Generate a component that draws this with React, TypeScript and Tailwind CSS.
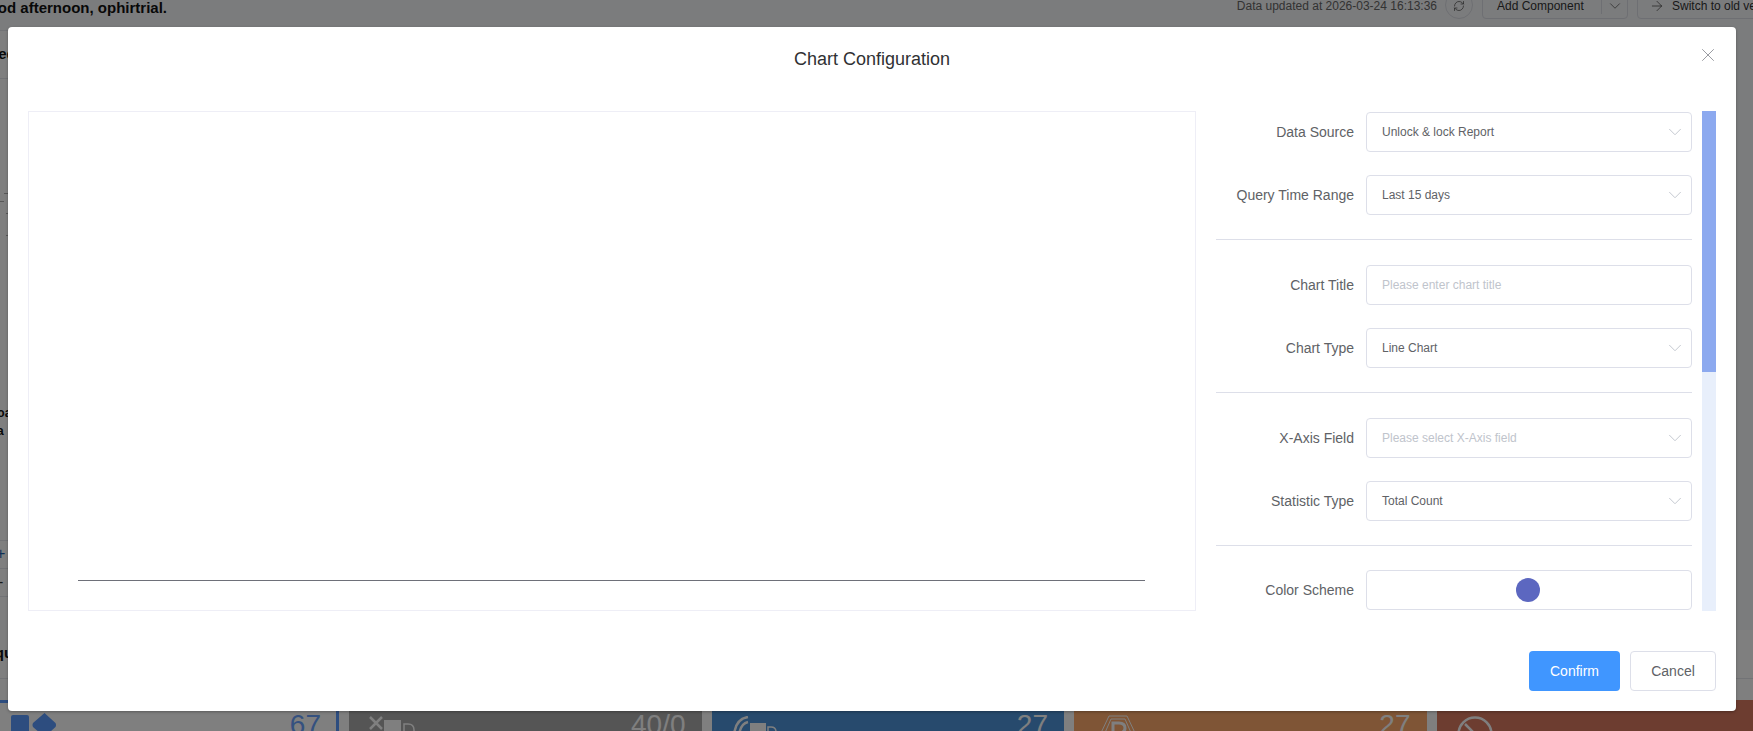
import React from "react";
import { ChevronDown, X, ArrowRight, RefreshCw } from "lucide-react";

const FONT = "font-['Liberation_Sans',Arial,sans-serif]";
const BORDER = "border-[#dddfe9]";

const SelectBox = ({ value, placeholder }: { value?: string; placeholder?: string }) => (
  <div className={`flex h-10 w-[326px] items-center justify-between rounded border ${BORDER} bg-white pl-[15px] pr-[5px]`}>
    <span className={value ? "text-xs text-[#606266]" : "text-xs text-[#c0c4cc]"}>{value || placeholder}</span>
    <ChevronDown className="h-[22px] w-[22px] text-[#c0c4cc]" strokeWidth={1} />
  </div>
);

const FormRow = ({ label, children }: { label: string; children: React.ReactNode }) => (
  <div className="flex h-10 items-center justify-end">
    <label className="mr-3 text-sm text-[#606266]">{label}</label>
    {children}
  </div>
);

const Divider = ({ after }: { after: string }) => <div className={`mt-6 h-px bg-[#dddfe9] ${after}`} />;

const StatCard = ({ color, number, children, wide }: { color: string; number?: string; children: React.ReactNode; wide?: boolean }) => (
  <div className={`flex h-[31px] shrink-0 items-start justify-between overflow-hidden pr-4 pt-[11px] ${color} ${wide ? "w-[317px]" : "w-[352.5px]"}`}>
    {children}
    <span className="text-[28px] leading-[28px] text-white">{number}</span>
  </div>
);

const Mark = ({ className }: { className: string }) => <div className={`h-px bg-[#b0b0b0] ${className}`} />;

export default function App() {
  return (
    <div className={`relative h-[731px] w-full overflow-hidden bg-[#f7f8fa] ${FONT}`}>
      {/* page behind the dialog */}
      <div className="flex h-[30px] items-start justify-between">
        <div className="-ml-[23px] whitespace-nowrap text-[15px] font-bold leading-[16px] text-[#111]">Good afternoon, ophirtrial.</div>
        <div className="-mr-[44px] -mt-[9px] flex h-[28px] items-center">
          <span className="mt-[2px] whitespace-nowrap text-xs text-[#666]">Data updated at 2026-03-24 16:13:36</span>
          <div className="ml-2 flex h-[28px] w-[28px] items-center justify-center rounded-full border border-[#dcdfe6]">
            <RefreshCw className="mt-[2px] h-3 w-3 text-[#555]" strokeWidth={1.5} />
          </div>
          <div className="ml-[9px] flex h-[28px] w-[146px] items-center rounded border border-[#dcdfe6] pl-[14px] text-xs text-[#333]">
            <span className="mt-[2px] flex-1 whitespace-nowrap">Add Component</span>
            <div className="h-[18px] w-px bg-[#dcdfe6]" />
            <div className="flex w-[25px] items-center justify-center">
              <ChevronDown className="mt-[2px] h-[18px] w-[18px] text-[#555]" strokeWidth={1} />
            </div>
          </div>
          <div className="ml-[9px] flex h-[28px] w-[160px] items-center gap-[7px] rounded border border-[#dcdfe6] pl-[11px] text-xs text-[#333]">
            <ArrowRight className="mt-[2px] h-4 w-4" strokeWidth={1} />
            <span className="mt-[2px] whitespace-nowrap">Switch to old version</span>
          </div>
        </div>
      </div>
      <div className="w-[1000px]">
        <div className="h-[48px] border-t border-[#e4e7ed] bg-white pt-[15px]">
          <div className="-ml-[21px] text-[15px] font-bold leading-none text-[#111]">Need</div>
        </div>
        <div className="h-[462px] border-t border-[#e4e7ed] bg-white pt-[114px]">
          <Mark className="ml-1 w-1" />
          <Mark className="mt-[7px] w-1" />
          <Mark className="ml-[6px] mt-[11px] w-[2px]" />
          <Mark className="ml-[6px] mt-[21px] w-[2px]" />
          <div className="-ml-[10px] mt-[168px] text-xs font-bold leading-[18px] text-[#111]">Loa</div>
          <div className="-ml-[3px] text-xs font-bold leading-[18px] text-[#111]">a</div>
        </div>
        <div className="h-[28px] border-t border-[#e4e7ed] bg-white pl-0 text-base leading-[26px] text-[#1f5fae]">
          <div className="-ml-[4px]">+</div>
        </div>
        <div className="h-[28px] border-t border-[#e4e7ed] bg-white text-base leading-[26px] text-[#333]">
          <div className="-ml-[2px]">-</div>
        </div>
        <div className="h-[24px] border-t border-[#e4e7ed] bg-white" />
      </div>
      <div className="h-[10px]" />
      <div className="h-[70px] bg-white">
        <div className="h-[49px] border-b border-[#e4e7ed] pt-[15px]">
          <div className="-ml-[16px] text-[15px] font-bold leading-none text-[#111]">Aqu</div>
        </div>
      </div>
      <div className="flex gap-[10px] bg-white">
        <div className="h-[31px] w-[339px] shrink-0 overflow-hidden border-r-[3px] border-t-[3px] border-[#5a9aff] pl-[11px] pr-[15px] pt-[8px]">
          <div className="flex items-start justify-between">
            <svg width="46" height="30" viewBox="0 0 46 30" className="-mt-[3px] shrink-0">
              <rect x="0" y="7" width="18" height="24" rx="2" fill="#5a9aff" />
              <path d="M33.5 5 L44.5 15 Q45.5 17 44.5 19 L33.5 29 L22 19 Q21 17 22 15 Z" fill="#5a9aff" />
            </svg>
            <span className="text-[28px] leading-[28px] text-[#6aa3ff]">67</span>
          </div>
        </div>
        <StatCard color="bg-[#aaaaaa] pl-5" number="40/0">
          <svg width="46" height="20" viewBox="0 0 46 20" fill="none" className="mt-[4px] shrink-0">
            <path d="M1 2 L13 14 M13 2 L1 14" stroke="#fff" strokeWidth="2.5" />
            <rect x="15" y="5" width="17" height="15" fill="#fff" />
            <path d="M35 20 V9 H39 Q45 9 45 15 V20" stroke="#fff" strokeWidth="1.5" />
          </svg>
        </StatCard>
        <StatCard color="bg-[#4e94da] pl-[21px]" number="27">
          <svg width="44" height="20" viewBox="0 0 44 20" fill="none" className="mt-[5px] shrink-0">
            <path d="M1 20 Q2 3 15 1 M6 20 Q7 8 15 6" stroke="#fff" strokeWidth="2.5" />
            <rect x="17" y="7" width="16" height="13" fill="#fff" />
            <path d="M35 20 V11 H38 Q43 11 43 16 V20" stroke="#fff" strokeWidth="1.5" />
          </svg>
        </StatCard>
        <StatCard color="bg-[#feaa6c] pl-[25px]" number="27">
          <svg width="38" height="20" viewBox="0 0 38 20" fill="none" className="mt-[4px] shrink-0">
            <path d="M10 1 H28 L37 20 M10 1 L1 20" stroke="#fff" strokeWidth="1" />
            <path d="M12 4 H26 L33 20 M12 4 L5 20" stroke="#fff" strokeWidth="1" />
            <path d="M14 20 V8 H20 Q26 8 26 13 Q26 18 20 18 H14" stroke="#fff" strokeWidth="3" />
          </svg>
        </StatCard>
        <StatCard color="bg-[#da7a60] pl-5" wide>
          <svg width="36" height="36" viewBox="0 0 36 36" fill="none" className="mt-[5px] shrink-0">
            <circle cx="18" cy="18" r="16.5" stroke="#fff" strokeWidth="2.5" />
            <path d="M8 8 L28 28" stroke="#fff" strokeWidth="2.5" />
          </svg>
        </StatCard>
      </div>

      {/* dialog overlay */}
      <div className="absolute inset-0 bg-black/50" />
      <div className="absolute left-2 top-[27px] flex h-[684px] w-[1728px] flex-col rounded-sm bg-white shadow-[0_1px_3px_rgba(0,0,0,0.3)]">
        <div className="relative flex h-[84px] shrink-0 items-start justify-center pt-[20px]">
          <span className="text-lg leading-6 text-[#303133]">Chart Configuration</span>
          <X className="absolute right-[17px] top-[17px] h-[22px] w-[22px] text-[#909399]" strokeWidth={1} />
        </div>
        <div className="flex h-[500px] shrink-0 pl-5 pr-5">
          <div className="flex h-full w-[1168px] shrink-0 flex-col justify-end border border-[#eeeef6] pb-[29px] pl-[49px] pr-[50px]">
            <div className="h-px bg-[#6e7079]" />
          </div>
          <div className="ml-5 w-[476px] shrink-0 overflow-hidden">
            <div className="pt-px">
              <FormRow label="Data Source"><SelectBox value="Unlock & lock Report" /></FormRow>
              <div className="h-[23px]" />
              <FormRow label="Query Time Range"><SelectBox value="Last 15 days" /></FormRow>
              <Divider after="mb-[25px]" />
              <FormRow label="Chart Title">
                <div className={`flex h-10 w-[326px] items-center rounded border ${BORDER} bg-white pl-[15px] text-xs text-[#c0c4cc]`}>Please enter chart title</div>
              </FormRow>
              <div className="h-[23px]" />
              <FormRow label="Chart Type"><SelectBox value="Line Chart" /></FormRow>
              <Divider after="mb-[25px]" />
              <FormRow label="X-Axis Field"><SelectBox placeholder="Please select X-Axis field" /></FormRow>
              <div className="h-[23px]" />
              <FormRow label="Statistic Type"><SelectBox value="Total Count" /></FormRow>
              <Divider after="mb-6" />
              <FormRow label="Color Scheme">
                <div className={`flex h-10 w-[326px] items-center justify-center rounded border ${BORDER} bg-white pr-[2px]`}>
                  <div className="h-6 w-6 rounded-full bg-[#5c67c0]" />
                </div>
              </FormRow>
            </div>
          </div>
          <div className="ml-[10px] h-full w-[14px] shrink-0 bg-[#e8effb]">
            <div className="h-[261px] bg-[#8ca9ef]" />
          </div>
        </div>
        <div className="flex flex-1 items-start justify-end gap-[10px] pr-5 pt-10">
          <button className="h-10 w-[91px] rounded bg-[#4096ff] text-sm text-white">Confirm</button>
          <button className={`h-10 w-[86px] rounded border ${BORDER} bg-white text-sm text-[#606266]`}>Cancel</button>
        </div>
      </div>
    </div>
  );
}
